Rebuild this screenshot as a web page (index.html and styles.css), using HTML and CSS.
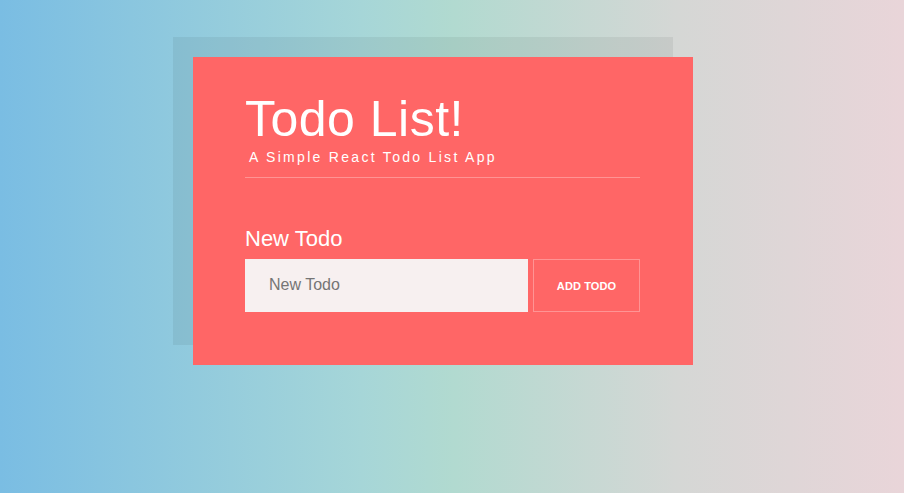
FILE: index.html
```html
<!DOCTYPE html>
<html lang="en">
<head>
<meta charset="utf-8">
<title>Todo List!</title>
<link rel="stylesheet" href="styles.css">
</head>
<body>
  <main class="page">
    <section class="card">
      <header class="card-header">
        <h1 class="title">Todo List!</h1>
        <p class="subtitle">A Simple React Todo List App</p>
      </header>
      <form class="new-todo">
        <label class="new-todo-label" for="todo">New Todo</label>
        <div class="new-todo-row">
          <input class="new-todo-input" id="todo" type="text" placeholder="New Todo">
          <button class="new-todo-btn" type="button">ADD TODO</button>
        </div>
      </form>
    </section>
  </main>
</body>
</html>
```

FILE: styles.css
```css
* {
  box-sizing: border-box;
}

html, body {
  margin: 0;
  padding: 0;
  height: 100%;
}

body {
  font-family: "Liberation Sans", Arial, Helvetica, sans-serif;
  background: linear-gradient(to right, #7abde3 0%, #a6d6d8 40%, #b1dad0 50%, #d5d7d5 75%, #e9d5d9 100%);
  color: #fff;
}

.page {
  padding: 57px 0 0 193px;
}

.card {
  width: 500px;
  height: 308px;
  background: #ff6666;
  box-shadow: -20px -20px 0 rgba(0, 0, 0, 0.06);
  padding: 33px 52px 0 52px;
}

.card-header {
  border-bottom: 1px solid rgba(255, 255, 255, 0.3);
  padding-bottom: 12px;
  width: 395px;
}

.title {
  margin: 0;
  font-size: 50px;
  line-height: 58px;
  font-weight: 400;
  letter-spacing: 0.5px;
}

.subtitle {
  margin: 1px 0 0 4px;
  font-size: 14px;
  line-height: 16px;
  letter-spacing: 2.3px;
}

.new-todo {
  margin-top: 48px;
}

.new-todo-label {
  display: block;
  font-size: 22px;
  line-height: 25px;
}

.new-todo-row {
  display: flex;
  gap: 5px;
  margin-top: 8px;
  width: 395px;
}

.new-todo-input {
  width: 283px;
  height: 53px;
  border: none;
  outline: none;
  background: #f7f0f0;
  padding: 0 24px 1px;
  font-family: "Liberation Sans", Arial, sans-serif;
  font-size: 16px;
  color: #555;
}

.new-todo-input::placeholder {
  color: #757575;
}

.new-todo-btn {
  width: 107px;
  height: 53px;
  background: transparent;
  border: 1px solid rgba(255, 255, 255, 0.3);
  color: #fff;
  font-family: "Liberation Sans", Arial, sans-serif;
  font-weight: 700;
  font-size: 11px;
  letter-spacing: 0.1px;
  padding: 0;
}
```
